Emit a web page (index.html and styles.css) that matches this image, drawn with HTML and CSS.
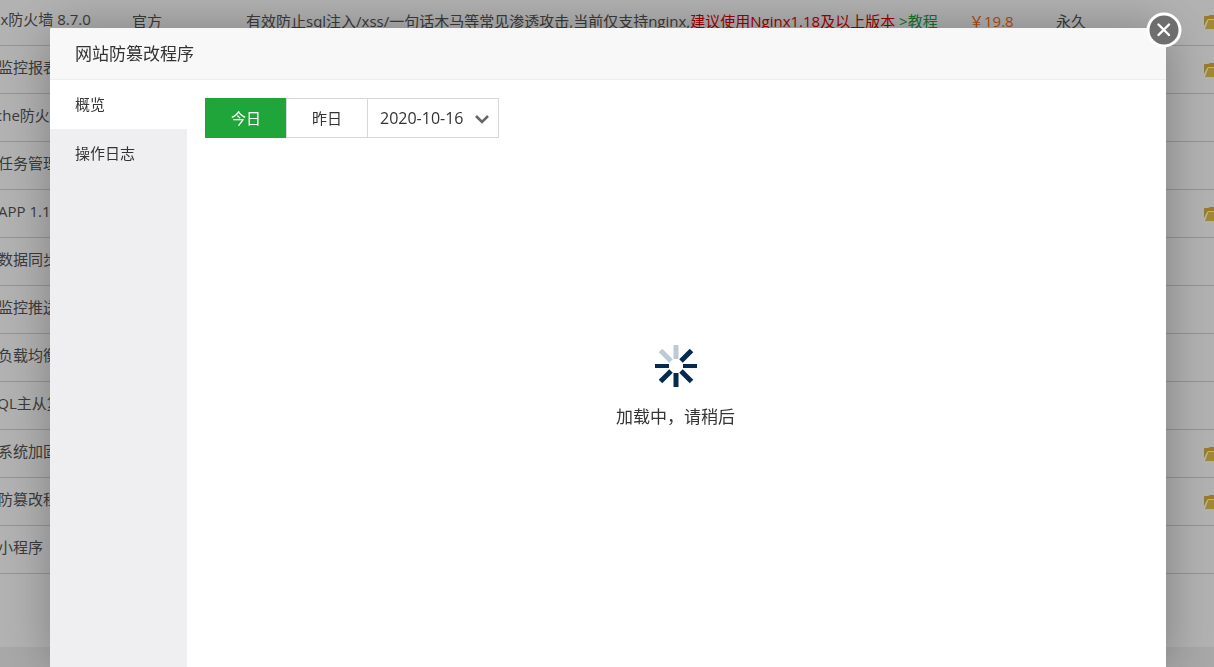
FILE: index.html
```html
<!DOCTYPE html>
<html lang="zh-CN">
<head>
    <meta charset="UTF-8">
    <meta name="viewport" content="width=device-width, initial-scale=1.0">
    <title>网站防篡改程序</title>
    <link rel="stylesheet" href="styles.css">
</head>
<body>
    <svg class="sprite" aria-hidden="true">
        <symbol id="folder" viewBox="0 0 18 14">
            <path d="M0 11V2q0-1 1-1h3l2-1h7q1 0 1 1v3H5q-1 0-2 1z" fill="#d9b23c"/>
            <path d="M1 14L4 6q0-1 1-1h13l-3 8q0 1-1 1z" fill="#e6c548"/>
        </symbol>
    </svg>
    <main class="soft-list">
        <table class="soft-table">
            <colgroup>
                <col class="col-name">
                <col class="col-author">
                <col class="col-desc">
                <col class="col-price">
                <col class="col-expire">
                <col>
            </colgroup>
            <tbody>
                <tr>
                    <td class="name">Nginx防火墙 8.7.0</td>
                    <td>官方</td>
                    <td>有效防止sql注入/xss/一句话木马等常见渗透攻击,当前仅支持nginx,<span class="warn">建议使用Nginx1.18及以上版本</span> <a href="#">&gt;教程</a></td>
                    <td class="price">￥19.8</td>
                    <td>永久</td>
                    <td><svg class="folder"><use href="#folder"/></svg></td>
                </tr>
                <tr><td class="name">网站监控报表</td><td></td><td></td><td></td><td></td><td><svg class="folder"><use href="#folder"/></svg></td></tr>
                <tr><td class="name">Apache防火墙</td><td></td><td></td><td></td><td></td><td></td></tr>
                <tr><td class="name">宝塔任务管理</td><td></td><td></td><td></td><td></td><td></td></tr>
                <tr><td class="name">宝塔APP 1.1</td><td></td><td></td><td></td><td></td><td><svg class="folder"><use href="#folder"/></svg></td></tr>
                <tr><td class="name">宝塔数据同步</td><td></td><td></td><td></td><td></td><td></td></tr>
                <tr><td class="name">宝塔监控推送</td><td></td><td></td><td></td><td></td><td></td></tr>
                <tr><td class="name">宝塔负载均衡</td><td></td><td></td><td></td><td></td><td></td></tr>
                <tr><td class="name">MySQL主从复</td><td></td><td></td><td></td><td></td><td></td></tr>
                <tr><td class="name">宝塔系统加固</td><td></td><td></td><td></td><td></td><td><svg class="folder"><use href="#folder"/></svg></td></tr>
                <tr><td class="name">网站防篡改程</td><td></td><td></td><td></td><td></td><td><svg class="folder"><use href="#folder"/></svg></td></tr>
                <tr><td class="name">宝塔小程序</td><td></td><td></td><td></td><td></td><td></td></tr>
            </tbody>
        </table>
    </main>

    <div class="overlay">
        <section class="modal" role="dialog" aria-labelledby="modal-title">
            <h1 class="modal-title" id="modal-title">网站防篡改程序</h1>
            <button class="close" type="button" aria-label="关闭">
                <svg viewBox="0 0 36 36">
                    <circle cx="18" cy="18" r="16" fill="#6e6e6e" stroke="#fff" stroke-width="3"/>
                    <path d="M12.5 12.5L23 23M23 12.5L12.5 23" stroke="#fff" stroke-width="2.4" stroke-linecap="round"/>
                </svg>
            </button>
            <div class="modal-body">
                <nav class="side-menu">
                    <a class="active" href="#">概览</a>
                    <a href="#">操作日志</a>
                </nav>
                <div class="content">
                    <div class="date-bar">
                        <button class="active" type="button">今日</button>
                        <button type="button">昨日</button>
                        <div class="date-select">
                            <select aria-label="日期">
                                <option>2020-10-16</option>
                            </select>
                            <svg viewBox="0 0 14 10"><path d="M1 2L7 8L13 2" fill="none" stroke="#666" stroke-width="2.6"/></svg>
                        </div>
                    </div>
                    <div class="loading">
                        <svg viewBox="-22 -22 44 44" stroke="#052a4e" stroke-width="5">
                            <path d="M0 -7V-21" stroke="#bcc9d6"/>
                            <path d="M-5 -5L-15.5 -15.5" stroke="#bcc9d6"/>
                            <path d="M5 -5L15.5 -15.5M5 5L15.5 15.5M0 7V21M-5 5L-15.5 15.5"/>
                            <path d="M7 0H21M-7 0H-21" stroke-width="4"/>
                        </svg>
                        <p>加载中，请稍后</p>
                    </div>
                </div>
            </div>
        </section>
    </div>
</body>
</html>
```
FILE: styles.css
```css
* {
    box-sizing: border-box;
}

html, body {
    height: 100%;
    margin: 0;
    overflow: hidden;
}

body {
    background: #f1f1f1;
    color: #555;
    font: 15px/20px "Open Sans", "Noto Sans CJK SC", sans-serif;
}

a {
    text-decoration: none;
}

.sprite {
    display: none;
}

/* plugin list behind the dialog */
.soft-list {
    margin: -3px 0 0 -32px;
    padding-bottom: 73px;
    width: calc(100% + 60px);
    background: #fff;
}

.soft-table {
    width: 100%;
    table-layout: fixed;
    border-collapse: collapse;
}

.col-name { width: 164px; }
.col-author { width: 114px; }
.col-desc { width: 723px; }
.col-price { width: 87px; }
.col-expire { width: 148px; }

.soft-table td {
    height: 48px;
    padding: 0;
    border-bottom: 1px solid #d4d4d4;
    white-space: nowrap;
}

.soft-table .name {
    padding-bottom: 4px;
}

.soft-table a {
    color: #20a53a;
}

.warn {
    color: #e60000;
}

.price {
    color: #fc6d26;
}

.folder {
    display: block;
    width: 18px;
    height: 14px;
    margin-top: 2px;
}

.overlay {
    position: fixed;
    inset: 0;
    display: flex;
    padding: 28px 48px 0 50px;
    background: rgba(0, 0, 0, 0.3);
}

.modal {
    position: relative;
    display: flex;
    flex-direction: column;
    flex: 1;
    background: #fff;
    border-radius: 2px 2px 0 0;
    box-shadow: 1px 1px 50px rgba(0, 0, 0, 0.3);
    color: #333;
}

.modal-title {
    margin: 0;
    padding: 0 25px;
    border-bottom: 1px solid #eee;
    border-radius: 2px 2px 0 0;
    background: #f8f8f8;
    font-size: 17px;
    font-weight: 400;
    line-height: 51px;
}

.close {
    position: absolute;
    top: -16px;
    right: -16px;
    width: 36px;
    height: 36px;
    padding: 0;
    border: 0;
    background: none;
    cursor: pointer;
}

.close svg {
    display: block;
}

.modal-body {
    display: flex;
    flex: 1;
}

.side-menu {
    width: 137px;
    background: #efeff2;
}

.side-menu a {
    display: block;
    padding-left: 25px;
    color: #333;
    line-height: 49px;
}

.side-menu .active {
    background: #fff;
}

.content {
    flex: 1;
    padding: 18px 20px 0 18px;
}

.date-bar {
    display: flex;
}

.date-bar button, .date-bar select {
    height: 40px;
    border: 1px solid #d8d8d8;
    border-radius: 0;
    background: #fff;
    color: #333;
    font: inherit;
    cursor: pointer;
}

.date-bar button {
    width: 82px;
    margin-right: -1px;
    padding: 0;
}

.date-bar .active {
    border-color: #20a53a;
    background: #20a53a;
    color: #fff;
}

.date-select {
    position: relative;
}

.date-bar select {
    width: 132px;
    padding: 0 12px;
    font-size: 16px;
    appearance: none;
}

.date-select svg {
    position: absolute;
    top: 16px;
    right: 10px;
    width: 14px;
    height: 10px;
    pointer-events: none;
}

.loading {
    display: flex;
    flex-direction: column;
    align-items: center;
    gap: 19px;
    margin-top: 206px;
}

.loading svg {
    width: 44px;
    height: 44px;
}

.loading p {
    margin: 0;
    font-size: 17px;
}
```
